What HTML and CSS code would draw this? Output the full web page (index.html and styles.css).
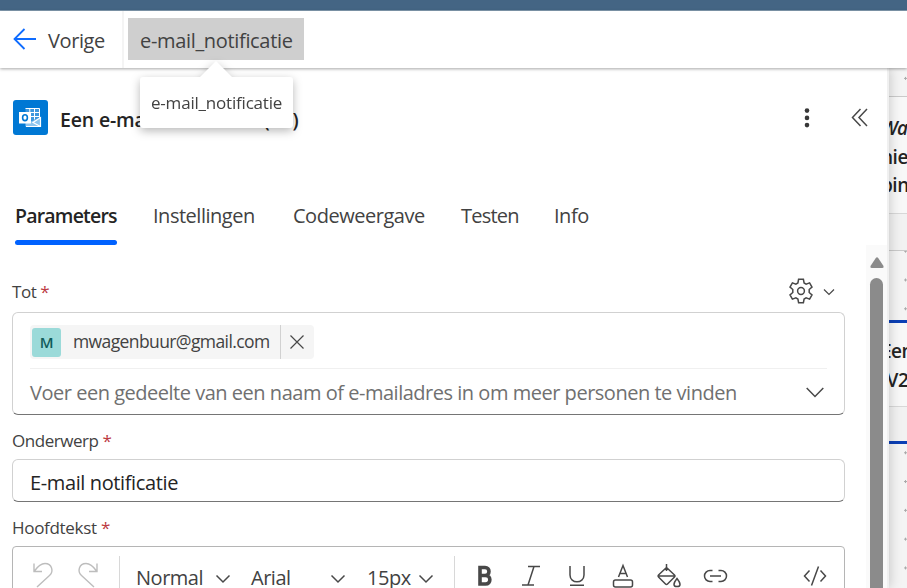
FILE: index.html
```html
<!DOCTYPE html>
<html lang="nl">
<head>
  <meta charset="UTF-8" />
  <meta name="viewport" content="width=device-width, initial-scale=1.0"/>
  <title>e-mail_notificatie</title>
  <link rel="stylesheet" href="styles.css">
</head>
<body>

  <div class="topstrip"></div>

  <header class="header">
    <div class="back">
      <svg class="back-icon" width="24" height="22" viewBox="0 0 24 22"><path d="M23 11H1.500M11.500 1L1.500 11l10 10"/></svg>
      <span class="back-text">Vorige</span>
    </div>
    <div class="flow-name">
      <span class="flow-text">e-mail_notificatie</span>
      <div class="tooltip"><span class="tooltip-text">e-mail_notificatie</span></div>
    </div>
  </header>

  <div class="content">
    <main class="panel">
      <div class="panel-header">
        <div class="logo">
          <svg width="35" height="35" viewBox="0 0 35 35">
            <path d="M12.500 8.500h14v11l-6 2-8-2z" fill="#3d97de"/>
            <path d="M12.500 8.500H26.500V19M12.500 12.500h14M16.800 8.500v12M21.500 8.500v11M14 16.500h12.500" fill="none" stroke="#fff" stroke-width="1"/>
            <path d="M12.500 26.500V22l7-1 8.300-4v9.500z" fill="#8cc4ef"/>
            <path d="M13 26.500h14.500V17.500L20 22.500l7.500 4" fill="none" stroke="#fff" stroke-width="1.200"/>
            <rect x="6" y="12" width="12" height="11.500" fill="#fff"/>
            <ellipse cx="12" cy="17.700" rx="2.400" ry="2.900" fill="none" stroke="#0078d4" stroke-width="1.600"/>
          </svg>
        </div>
        <h1>Een e-mail verzenden (V2)</h1>
        <svg class="more" width="6" height="20" viewBox="0 0 6 20"><circle cx="3" cy="2.600" r="2.300"/><circle cx="3" cy="9.900" r="2.300"/><circle cx="3" cy="17.100" r="2.300"/></svg>
        <svg class="line-icon" width="18" height="20" viewBox="0 0 18 20"><path d="M9.500 1L1.500 9.500l8 8.500M16 1L8 9.500l8 8.500"/></svg>
      </div>

      <nav class="tabs">
        <span class="tab active">Parameters</span>
        <span class="tab tab-settings">Instellingen</span>
        <span class="tab tab-code">Codeweergave</span>
        <span class="tab tab-test">Testen</span>
        <span class="tab tab-info">Info</span>
      </nav>

      <div class="scroll-area">
        <div class="form">
          <div class="label-row">
            <label class="label-to">Tot <b>*</b></label>
            <div class="field-menu">
              <svg class="line-icon" width="26" height="26" viewBox="0 0 26 26"><path d="M10.600 1.300h4.800l.7 3.700 2 1.150 3.500-1.250 2.400 4.100-2.800 2.500v3l2.800 2.500-2.400 4.100-3.500-1.250-2 1.150-.7 3.700h-4.800l-.7-3.700-2-1.150-3.500 1.250L2 17l2.800-2.500v-3L2 9l2.400-4.100 3.500 1.250 2-1.150z"/><circle cx="13" cy="13" r="3.400"/></svg>
              <svg class="line-icon thin" width="12" height="8" viewBox="0 0 12 8"><path d="M1 2.500l5 5 5-5"/></svg>
            </div>
          </div>

          <div class="people-box">
            <div class="chip-row">
              <div class="chip">
                <span class="avatar">M</span>
                <span class="chip-text">mwagenbuur@gmail.com</span>
                <span class="chip-close"><svg class="line-icon thin" width="16" height="16" viewBox="0 0 16 16"><path d="M1.500 1.500l13 13M14.500 1.500l-13 13"/></svg></span>
              </div>
            </div>
            <div class="people-input">
              <span class="placeholder">Voer een gedeelte van een naam of e-mailadres in om meer personen te vinden</span>
              <svg class="line-icon" width="18" height="11" viewBox="0 0 18 11"><path d="M.7 1L9 9.500 17.300 1"/></svg>
            </div>
          </div>

          <label class="label label-subject">Onderwerp <b>*</b></label>
          <div class="text-box"><span class="subject">E-mail notificatie</span></div>

          <label class="label label-body">Hoofdtekst <b>*</b></label>
          <div class="editor">
            <div class="tools history">
              <svg width="20" height="26" viewBox="0 0 20 26"><path d="M1 1.500V9.500H9M1.500 9C5 4 8 1.500 12 1.500c7 0 9 8 4.500 12L4 25"/></svg>
              <svg width="20" height="26" viewBox="0 0 20 26"><path d="M19 1.500V9.500H11M18.500 9C15 4 12 1.500 8 1.500c-7 0-9 8-4.500 12L16 25"/></svg>
            </div>
            <div class="tools selects">
              <span class="sel sel-style">Normal</span>
              <svg class="line-icon" width="16" height="10" viewBox="0 0 16 10"><path d="M1.500 1.500L8 8l6.500-6.500"/></svg>
              <span class="sel sel-font">Arial</span>
              <svg class="line-icon" width="16" height="10" viewBox="0 0 16 10"><path d="M1.500 1.500L8 8l6.500-6.500"/></svg>
              <span class="sel sel-size">15px</span>
              <svg class="line-icon" width="16" height="10" viewBox="0 0 16 10"><path d="M1.500 1.500L8 8l6.500-6.500"/></svg>
            </div>
            <div class="tools formats">
              <svg class="line-icon bold" width="16" height="22" viewBox="0 0 16 22"><path d="M3 2.500h5c5.300 0 5.300 8 0 8H3zM3 10.500h5.500c5.800 0 5.800 8.500 0 8.500H3z"/></svg>
              <svg class="line-icon" width="20" height="22" viewBox="0 0 20 22"><path d="M7 1.500h12M1 20h12M13 1.500L7 20"/></svg>
              <svg class="line-icon" width="18" height="22" viewBox="0 0 18 22"><path d="M2 1v9c0 9 14 9 14 0V1M2 20.300h14"/></svg>
              <svg class="line-icon" width="22" height="24" viewBox="0 0 22 24"><path d="M6.500 13L11 1.500 15.500 13M8 9.500h6"/><rect x="1.500" y="16" width="19" height="7" rx="2"/></svg>
              <svg class="line-icon" width="24" height="24" viewBox="0 0 24 24"><path d="M9.500 0v7M9.500 3.500L1.500 11q-1 1 0 2l7 7q1 1 2 0l7-7q1-1 0-2zM1.500 12H17.500M20 14.500c-4 5-4 8 0 8s4-3 0-8z"/></svg>
              <svg class="line-icon" width="25" height="14" viewBox="0 0 25 14"><path d="M9.500 1.500H7a5.500 5.500 0 0 0 0 11h2.500M15.500 1.500H18a5.500 5.500 0 0 1 0 11h-2.500M7 7h11"/></svg>
              <svg class="line-icon code" width="24" height="22" viewBox="0 0 24 22"><path d="M6.500 5.500L1.500 11l5 5.500M17.500 5.500l5 5.500-5 5.500M15.500 1.500L8.500 20.500"/></svg>
            </div>
          </div>
        </div>

        <div class="scrollbar">
          <svg width="14" height="11" viewBox="0 0 14 11"><path d="M5.800 1q1.200-1.500 2.400 0l5.300 8q.7 2-1.200 2H1.700Q-.2 11 .5 9z" fill="#8b8b8b"/></svg>
          <div class="thumb"></div>
        </div>
      </div>
    </main>

    <aside class="canvas">
      <div class="node node-condition"><em>Wa</em><br>nie<br>pin</div>
      <div class="node node-mail">Een<br>(V2</div>
    </aside>
  </div>

</body>
</html>
```
FILE: styles.css
```css
* {
  box-sizing: border-box;
}

body {
  margin: 0;
  width: 907px;
  height: 588px;
  overflow: hidden;
  display: flex;
  flex-direction: column;
  font-family: "Open Sans", "Noto Sans", sans-serif;
  font-size: 20px;
  letter-spacing: -0.48px;
  color: #424242;
  background: #fff;
}

svg {
  display: block;
  flex-shrink: 0;
  overflow: visible;
}

span, label, h1 {
  white-space: nowrap;
}

.line-icon {
  fill: none;
  stroke: #484848;
  stroke-width: 1.5;
}

.line-icon.thin {
  stroke-width: 1.2;
}

.topstrip {
  height: 11px;
  flex-shrink: 0;
  background: #446584;
  border-bottom: 1px solid #8199ae;
}

/* header */
.header {
  height: 57px;
  flex-shrink: 0;
  display: flex;
  background: #fff;
  box-shadow: 0 1px 3px rgba(0, 0, 0, 0.35);
  position: relative;
  z-index: 2;
}

.back {
  width: 124px;
  display: flex;
  align-items: center;
  padding: 2px 0 0 13px;
  border-right: 2px solid #f4f4f4;
}

.back-icon {
  fill: none;
  stroke: #0f6cff;
  stroke-width: 1.8;
  margin: -4px 11px 0 0;
}

.back-text {
  letter-spacing: -0.4px;
}

.flow-name {
  position: relative;
  width: 176px;
  height: 42px;
  margin: 7px 0 0 4px;
  padding-left: 12px;
  line-height: 45px;
  letter-spacing: -0.33px;
  background: #cfcfcf;
}

.tooltip {
  position: absolute;
  top: 59px;
  left: 12px;
  width: 153px;
  height: 51px;
  padding-left: 11px;
  line-height: 52px;
  font-size: 17px;
  letter-spacing: -0.2px;
  background: #fff;
  border-radius: 3px;
  filter: drop-shadow(0 3px 5px rgba(0, 0, 0, 0.28));
}

.tooltip::before {
  content: "";
  position: absolute;
  left: 60px;
  top: -16px;
  border: 16px solid transparent;
  border-top: 0;
  border-bottom-color: #fff;
}

/* action panel */
.content {
  flex: 1;
  min-height: 0;
  display: flex;
}

.panel {
  width: 889px;
  flex-shrink: 0;
  display: flex;
  flex-direction: column;
  background: #fff;
  border-right: 2px solid #f0f0f0;
  box-shadow: 0 0 12px rgba(0, 0, 0, 0.22);
  z-index: 1;
}

.panel-header {
  height: 99px;
  display: flex;
  align-items: center;
  padding: 0 18px 0 13px;
}

.logo {
  width: 35px;
  height: 35px;
  border-radius: 3px;
  background: #0078d4;
}

h1 {
  flex: 1;
  margin: 3px 0 0 12px;
  font-size: 19.5px;
  font-weight: 600;
  letter-spacing: -0.16px;
  color: #242424;
}

.more {
  fill: #383838;
  margin-right: 41px;
}

.tabs {
  height: 78px;
  display: flex;
  gap: 36px;
  padding: 32px 0 0 15px;
}

.tab {
  height: 46px;
  line-height: 33px;
}

.tab.active {
  width: 102px;
  font-size: 19.5px;
  font-weight: 600;
  letter-spacing: -0.8px;
  color: #242424;
}

.tab.active::after {
  content: "";
  display: block;
  height: 5px;
  margin-top: 8px;
  border-radius: 3px;
  background: #0062ff;
}

.tab-settings { width: 104px; }
.tab-code { width: 132px; }
.tab-test { width: 57px; letter-spacing: -0.8px; }

.scroll-area {
  flex: 1;
  min-height: 0;
  display: flex;
  justify-content: space-between;
}

.form {
  width: 833px;
  margin-left: 12px;
  padding-top: 27px;
}

.form label {
  font-size: 17px;
  letter-spacing: -0.45px;
}

.form label.label-body {
  letter-spacing: -0.3px;
}

.form b {
  color: #bc3a42;
  font-weight: 400;
}

.label-row {
  display: flex;
  height: 40px;
  justify-content: space-between;
  line-height: 40px;
}

.field-menu {
  display: flex;
  gap: 9px;
  height: 38px;
  align-items: center;
  margin-right: 10px;
}

.people-box,
.text-box {
  border: 1px solid #d1d1d1;
  border-bottom-color: #757575;
  border-radius: 6px;
  padding: 0 17px;
}

.people-box {
  height: 103px;
}

.chip-row {
  height: 56px;
  padding-top: 12px;
  border-bottom: 1px solid #f0f0f0;
}

.chip {
  width: 284px;
  height: 34px;
  display: flex;
  align-items: center;
  background: #f5f5f5;
  border-radius: 4px;
}

.avatar {
  width: 29px;
  height: 29px;
  margin: 0 12px 0 2px;
  border-radius: 3px;
  background: #9bdad9;
  color: #115a59;
  font-size: 15px;
  font-weight: 600;
  line-height: 29px;
  text-align: center;
}

.chip-text {
  width: 207px;
  font-size: 17.5px;
  letter-spacing: -0.6px;
  margin-top: -3px;
}

.chip-close {
  height: 34px;
  padding: 9px 0 0 8px;
  border-left: 1px solid #d1d1d1;
}

.people-input {
  display: flex;
  justify-content: space-between;
  align-items: center;
  height: 46px;
  padding-right: 3px;
}

.placeholder {
  color: #707070;
}

.form .label {
  display: block;
  height: 44px;
  line-height: 52px;
}

.text-box {
  height: 43px;
  line-height: 45px;
  letter-spacing: -0.38px;
  color: #242424;
}

/* rich text toolbar */
.editor {
  height: 60px;
  display: flex;
  border: 1px solid #b5b5b5;
  border-radius: 4px;
}

.tools {
  display: flex;
  align-items: center;
  height: 60px;
}

.history {
  width: 107px;
  height: 50px;
  margin-top: 9px;
  padding: 6px 0 0 20px;
  gap: 25px;
  align-items: flex-start;
  border-right: 1px solid #d8d8d8;
  fill: none;
  stroke: #bdbdbd;
  stroke-width: 1.4;
}

.selects {
  width: 334px;
  padding-left: 16px;
}

.selects svg {
  margin-top: 3px;
}

.sel-style { width: 79px; }
.sel-font { width: 79px; margin-left: 20px; }
.sel-size { width: 51px; margin-left: 21px; }

.formats {
  flex: 1;
  display: grid;
  grid-template-columns: repeat(6, 46px) 1fr;
  justify-items: center;
  height: 50px;
  margin-top: 9px;
  padding: 0 17px 10px 7px;
  border-left: 1px solid #d8d8d8;
}

.formats .bold {
  stroke-width: 3.6;
}

.formats .code {
  justify-self: end;
}

.scrollbar {
  width: 21px;
  padding-top: 12px;
  background: #fafafa;
  display: flex;
  flex-direction: column;
  align-items: center;
}

.thumb {
  width: 13px;
  flex: 1;
  margin-top: 10px;
  border-radius: 7px 7px 0 0;
  background: #8b8b8b;
}

/* flow designer behind the panel */
.canvas {
  position: relative;
  flex: 1;
  overflow: hidden;
  background: radial-gradient(circle, #aaa 1px, transparent 1.3px) 2px -4px / 29px 28.8px #f4f4f4;
}

.node {
  position: absolute;
  left: -14px;
  width: 60px;
  padding: 17px 0 0 5px;
  font-size: 19px;
  font-weight: 600;
  line-height: 28.5px;
  color: #242424;
}

.node-condition {
  top: 28px;
  height: 155px;
  border: 1px solid #cacaca;
  background: linear-gradient(#f8f8f8 116px, #d8d8d8 116px, #d8d8d8 117px, #f2f2f2 117px);
}

.node-mail {
  top: 252px;
  height: 124px;
  padding: 14px 0 0 3px;
  border: 3px solid #0b3fb5;
  background: linear-gradient(#f8f8f8 83px, #d8d8d8 83px, #d8d8d8 84px, #f2f2f2 84px);
}
```
